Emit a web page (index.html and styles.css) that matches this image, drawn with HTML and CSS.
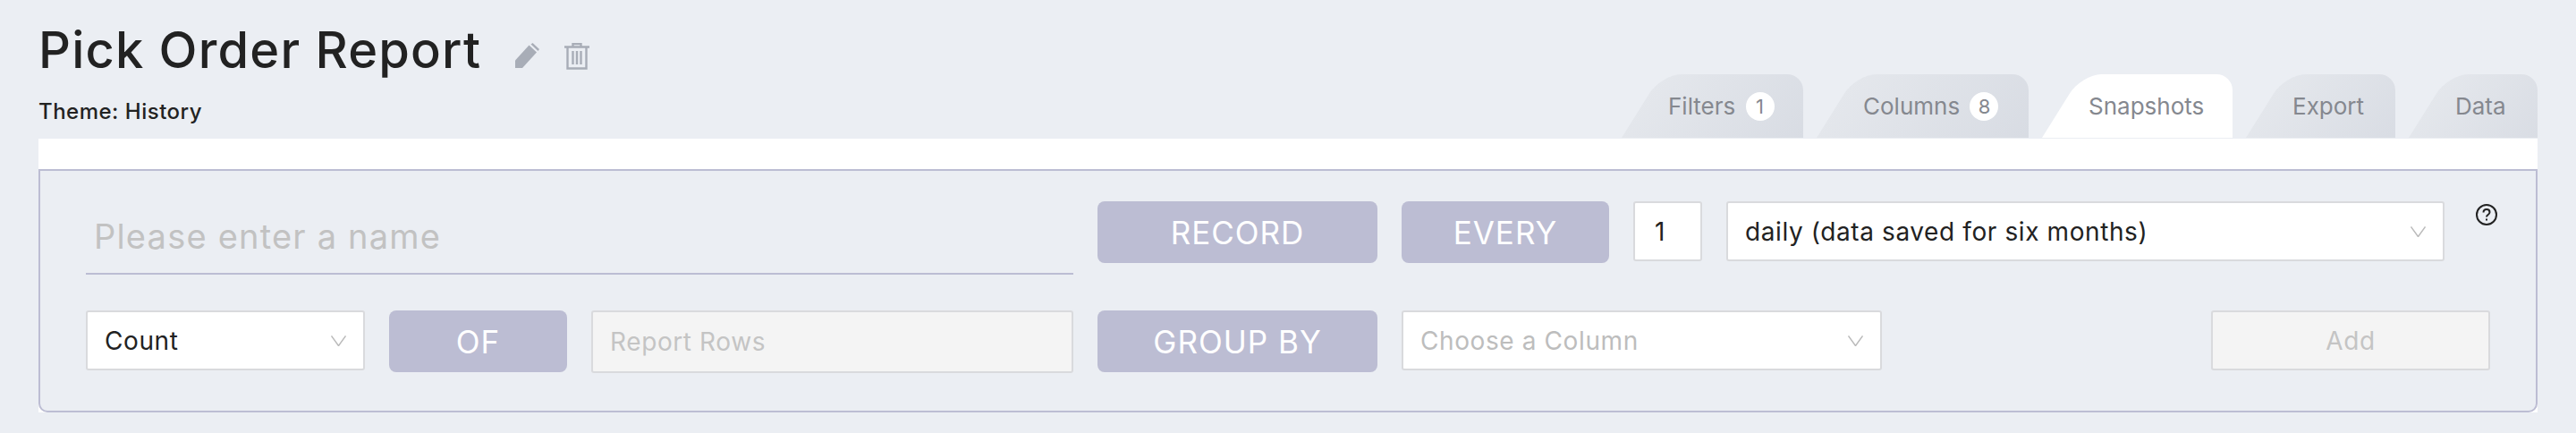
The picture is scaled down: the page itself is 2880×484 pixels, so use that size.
FILE: index.html
```html
<!DOCTYPE html>
<html lang="en">
<head>
    <meta charset="UTF-8">
    <meta name="viewport" content="width=device-width, initial-scale=1.0">
    <title>Pick Order Report</title>
    <link rel="stylesheet" href="styles.css">
</head>
<body>
    <div class="report-header">
        <div class="report-info">
            <div class="title-row">
                <h1>Pick Order Report</h1>
                <svg class="icon-pencil" viewBox="0 0 27 28" aria-hidden="true">
                    <polygon points="0,28 0,19.5 15.5,2.5 24,10.5 8,28"/>
                    <polygon points="17.5,1.5 19.5,0 27,7 25.5,9"/>
                </svg>
                <svg class="icon-trash" viewBox="0 0 28 30" aria-hidden="true">
                    <path d="M9.5 4V1h9v3M0 4.5h28M3.500 5v23.500h21V5M9.500 9v15M14 9v15M18.500 9v15"/>
                </svg>
            </div>
            <p class="theme">Theme: History</p>
        </div>
        <div class="tabs">
            <div class="tab tab-filters">Filters <span class="badge">1</span></div>
            <div class="tab tab-columns">Columns <span class="badge">8</span></div>
            <div class="tab tab-snapshots active">Snapshots</div>
            <div class="tab tab-export">Export</div>
            <div class="tab tab-data">Data</div>
        </div>
    </div>
    <div class="tab-body">
        <div class="snapshot-panel">
            <div class="row row-top">
                <div class="name-field">Please enter a name</div>
                <div class="tag tag-record">RECORD</div>
                <div class="tag tag-every">EVERY</div>
                <div class="field field-number">1</div>
                <div class="field field-period">
                    daily (data saved for six months)
                    <svg class="chevron" viewBox="0 0 17 12" aria-hidden="true"><path d="M.5.5l8 11 8-11"/></svg>
                </div>
                <svg class="icon-help" viewBox="0 0 24 24" aria-hidden="true">
                    <circle cx="12" cy="12" r="11"/>
                    <path d="M8.500 9.500c0-2.200 1.500-3.500 3.500-3.500s3.500 1.300 3.500 3.200c0 2.800-3.500 2.800-3.500 5.300M12 16.500v2"/>
                </svg>
            </div>
            <div class="row">
                <div class="field field-agg">
                    Count
                    <svg class="chevron" viewBox="0 0 17 12" aria-hidden="true"><path d="M.5.5l8 11 8-11"/></svg>
                </div>
                <div class="tag tag-of">OF</div>
                <div class="field field-disabled field-rows">Report Rows</div>
                <div class="tag tag-record">GROUP BY</div>
                <div class="field field-column">
                    <span class="muted">Choose a Column</span>
                    <svg class="chevron" viewBox="0 0 17 12" aria-hidden="true"><path d="M.5.5l8 11 8-11"/></svg>
                </div>
                <div class="field field-disabled field-add">Add</div>
            </div>
        </div>
    </div>
</body>
</html>
```

FILE: styles.css
```css
* {
    box-sizing: border-box;
}
body {
    margin: 0;
    padding: 0 43px;
    background: #ebeef3;
    color: #222;
    font-family: 'Inter', 'Liberation Sans', sans-serif;
}
.report-header {
    display: flex;
    justify-content: space-between;
    align-items: flex-end;
    height: 154px;
    margin-bottom: 1px;
}
.report-info {
    align-self: flex-start;
}
.title-row {
    display: flex;
    align-items: flex-start;
    padding-top: 24px;
    height: 88px;
}
h1 {
    margin: 0;
    font-size: 56px;
    line-height: 64px;
    font-weight: 500;
    letter-spacing: 1.2px;
    color: #222;
}
.icon-pencil {
    flex: none;
    width: 27px;
    height: 28px;
    margin: 24px 0 0 38px;
    fill: #a8adb7;
}
.icon-trash {
    flex: none;
    width: 28px;
    height: 30px;
    margin: 24px 0 0 28px;
    fill: none;
    stroke: #a8adb7;
    stroke-width: 2.4;
}
.theme {
    margin: 22px 0 0;
    font-size: 24px;
    line-height: 30px;
    font-weight: 500;
    letter-spacing: .5px;
}
.tabs {
    display: flex;
    gap: 15px;
}
.tab {
    position: relative;
    overflow: hidden;
    display: flex;
    align-items: center;
    height: 71px;
    padding-left: 52px;
    border-top-right-radius: 18px;
    color: #85888f;
    font-size: 26px;
    white-space: pre;
    z-index: 0;
}
.tab::before {
    content: "";
    position: absolute;
    top: 0;
    bottom: 0;
    left: 0;
    right: -60px;
    z-index: -1;
    background: linear-gradient(100deg, #e4e7ec, #d5d9e1);
    border-top-left-radius: 22px;
    transform: skewX(-32deg);
    transform-origin: bottom left;
}
.tab.active::before {
    background: #fff;
}
.tab-filters {
    width: 203px;
}
.tab-columns {
    width: 237px;
}
.tab-snapshots {
    width: 213px;
}
.tab-export {
    width: 167px;
}
.tab-data {
    width: 144px;
}
.badge {
    display: flex;
    justify-content: center;
    align-items: center;
    width: 32px;
    height: 32px;
    margin-left: 4px;
    border-radius: 50%;
    background: #fff;
    font-size: 22px;
}
.tab-body {
    background: #fff;
    padding-top: 34px;
}
.snapshot-panel {
    background: #ebeef3;
    border: 2px solid #bcbdd3;
    border-radius: 0 0 10px 10px;
    padding: 34px 43px 42px 51px;
    height: 272px;
}
.row {
    display: flex;
    align-items: flex-start;
    gap: 27px;
}
.row-top {
    height: 122px;
}
.name-field {
    flex: none;
    width: 1104px;
    height: 82px;
    padding: 16px 9px 0;
    border-bottom: 2px solid #bcbdd3;
    color: #c2c2c2;
    font-size: 38px;
    line-height: 46px;
    letter-spacing: 1.2px;
}
.tag {
    flex: none;
    display: flex;
    justify-content: center;
    align-items: center;
    height: 69px;
    border-radius: 8px;
    background: #bcbdd3;
    color: #fff;
    font-size: 35px;
    letter-spacing: 1px;
}
.tag-record {
    width: 313px;
}
.tag-every {
    width: 232px;
}
.tag-of {
    width: 199px;
}
.field {
    flex: none;
    display: flex;
    justify-content: space-between;
    align-items: center;
    height: 67px;
    padding: 0 19px;
    background: #fff;
    border: 2px solid #d9dadd;
    border-radius: 3px;
    font-size: 28px;
    letter-spacing: .6px;
}
.field-number {
    width: 77px;
    padding-left: 22px;
}
.field-period {
    width: 803px;
}
.field-agg {
    width: 312px;
}
.field-rows {
    width: 539px;
    height: 70px;
}
.field-column {
    width: 537px;
}
.field-disabled {
    background: #f4f4f4;
    color: #c4c4c4;
}
.field-add {
    width: 312px;
    margin-left: auto;
    margin-right: 8px;
    justify-content: center;
}
.muted {
    color: #bdbdbd;
}
.chevron {
    width: 17px;
    height: 12px;
    fill: none;
    stroke: #bbb;
    stroke-width: 1.5;
}
.icon-help {
    flex: none;
    width: 24px;
    height: 24px;
    margin: 3px 0 0 8px;
    fill: none;
    stroke: #222;
    stroke-width: 2;
}
```
